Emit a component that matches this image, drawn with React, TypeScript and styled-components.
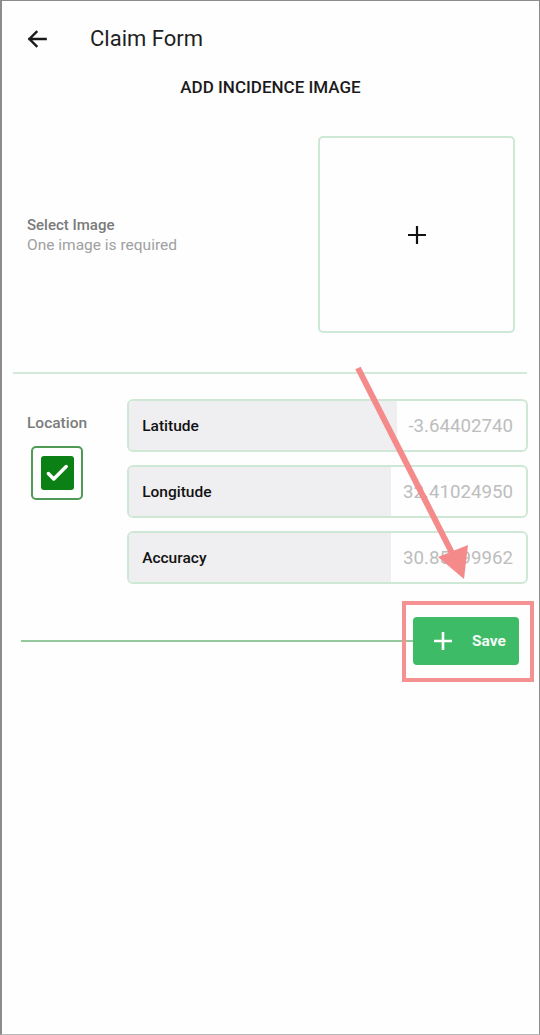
import styled, { createGlobalStyle } from "styled-components";

const Global = createGlobalStyle`
  html, body { margin: 0; padding: 0; background: #fff; }
  body { font-family: Roboto, "Noto Sans", Arial, sans-serif; }
`

const Frame = styled.div`
  position: relative;
  width: 540px;
  height: 1035px;
  box-sizing: border-box;
  border: 1px solid #8c8c8c;
  border-left-width: 2px;
  border-bottom-color: #b8b8b8;
  background: #fefefe;
  overflow: hidden;
`
const Header = styled.header`
  height: 76px;
  display: flex;
  align-items: center;
  padding-left: 22px;
  gap: 40px;
  box-sizing: border-box;
  padding-bottom: 1px;
`
const Title = styled.h1`
  margin: 0;
  font-size: 22px;
  font-weight: 400;
  color: #1f1f1f;
`
const SectionTitle = styled.h2`
  margin: 0;
  font-size: 17px;
  font-weight: 500;
  color: #1b1b1b;
  text-align: center;
  line-height: 20px;
`
const ImageRow = styled.div`
  display: flex;
  align-items: center;
  justify-content: space-between;
  padding: 39px 24px 0 25px;
`
const Hint = styled.div`
  display: flex;
  flex-direction: column;
  line-height: 20px;
`
const HintTitle = styled.span`
  font-size: 15px;
  font-weight: 500;
  color: #7a7a7a;
`
const HintText = styled.span`
  font-size: 15.5px;
  color: #a0a0a0;
`
const ImagePicker = styled.div`
  width: 197px;
  height: 197px;
  box-sizing: border-box;
  border: 2px solid #cde8d4;
  border-radius: 5px;
  display: flex;
  align-items: center;
  justify-content: center;
`
const Divider = styled.div`
  height: 2px;
  background: #d2ead9;
  margin: 39px 12px 0 11px;
`
const LocationRow = styled.div`
  display: flex;
  padding: 25px 11px 0 25px;
  gap: 40px;
`
const LocationSide = styled.div`
  display: flex;
  flex-direction: column;
  align-items: flex-start;
  padding-top: 15px;
  gap: 14px;
`
const SideLabel = styled.span`
  font-size: 15.5px;
  font-weight: 500;
  color: #7c7c7c;
`
const CheckOuter = styled.div`
  width: 52px;
  height: 54px;
  margin-left: 4px;
  box-sizing: border-box;
  border: 2px solid #4f9a55;
  border-radius: 5px;
  display: flex;
  align-items: center;
  justify-content: center;
`
const CheckInner = styled.div`
  width: 33px;
  height: 34px;
  border-radius: 3px;
  background: #0b8015;
  display: flex;
  align-items: center;
  justify-content: center;
`
const Fields = styled.div`
  flex: 1;
  display: flex;
  flex-direction: column;
  gap: 13px;
`
const Field = styled.div<{ $labelWidth: number }>`
  height: 53px;
  box-sizing: border-box;
  border: 2px solid #cfe8d6;
  border-radius: 6px;
  display: grid;
  grid-template-columns: ${({ $labelWidth }) => $labelWidth}px 1fr;
  overflow: hidden;
`
const FieldLabel = styled.div`
  background: #efeef0;
  display: flex;
  align-items: center;
  padding-left: 13px;
  font-size: 15.5px;
  font-weight: 500;
  color: #121212;
`
const FieldValue = styled.div`
  display: flex;
  align-items: center;
  justify-content: flex-end;
  padding-right: 13px;
  font-size: 18.7px;
  color: #bdbdbd;
`
const FooterRow = styled.div`
  display: flex;
  align-items: center;
  padding: 33px 20px 0 19px;
`
const FooterLine = styled.div`
  flex: 1;
  height: 2px;
  background: #93c79c;
`
const SaveButton = styled.button`
  width: 106px;
  height: 48px;
  border: none;
  border-radius: 4px;
  background: #3dbb67;
  color: #f4fbf6;
  display: flex;
  align-items: center;
  padding: 0 0 0 20px;
  gap: 19px;
  font-family: inherit;
  font-size: 15.5px;
  font-weight: 700;
`
const Highlight = styled.div`
  position: absolute;
  left: 400px;
  top: 600px;
  width: 132px;
  height: 81px;
  box-sizing: border-box;
  border: 4px solid #f59191;
`
const Annotation = styled.svg`
  position: absolute;
  left: 0;
  top: 0;
  pointer-events: none;
`

const fields = [
  { label: "Latitude", value: "-3.64402740", width: 268 },
  { label: "Longitude", value: "32.41024950", width: 262 },
  { label: "Accuracy", value: "30.85999962", width: 262 },
]

export default function App() {
  return (
    <Frame>
      <Global />
      <Header>
        <svg width="26" height="26" viewBox="0 0 24 24" fill="none" stroke="#1a1a1a" strokeWidth="2.2" strokeLinecap="square">
          <path d="M20 12H5M11.5 5.5L5 12l6.5 6.5" />
        </svg>
        <Title>Claim Form</Title>
      </Header>
      <SectionTitle>ADD INCIDENCE IMAGE</SectionTitle>

      <ImageRow>
        <Hint>
          <HintTitle>Select Image</HintTitle>
          <HintText>One image is required</HintText>
        </Hint>
        <ImagePicker>
          <svg width="22" height="22" viewBox="0 0 22 22" stroke="#111" strokeWidth="2.2">
            <path d="M11 2v18M2 11h18" />
          </svg>
        </ImagePicker>
      </ImageRow>

      <Divider />

      <LocationRow>
        <LocationSide>
          <SideLabel>Location</SideLabel>
          <CheckOuter>
            <CheckInner>
              <svg width="26" height="26" viewBox="0 0 24 24" fill="none" stroke="#fff" strokeWidth="3.2" strokeLinecap="round" strokeLinejoin="round">
                <path d="M4 12.5l5 5L20.5 6" />
              </svg>
            </CheckInner>
          </CheckOuter>
        </LocationSide>
        <Fields>
          {fields.map((f) => (
            <Field key={f.label} $labelWidth={f.width}>
              <FieldLabel>{f.label}</FieldLabel>
              <FieldValue>{f.value}</FieldValue>
            </Field>
          ))}
        </Fields>
      </LocationRow>

      <FooterRow>
        <FooterLine />
        <SaveButton>
          <svg width="20" height="20" viewBox="0 0 20 20" stroke="#fff" strokeWidth="2.6">
            <path d="M10 1v18M1 10h18" />
          </svg>
          Save
        </SaveButton>
      </FooterRow>

      <Highlight />
      <Annotation width="540" height="1035">
        <line x1="356" y1="367" x2="452" y2="556" stroke="#f58a8a" strokeWidth="6" />
        <polygon points="462,578 436,556 466,544" fill="#f58a8a" />
      </Annotation>
    </Frame>
  )
}
